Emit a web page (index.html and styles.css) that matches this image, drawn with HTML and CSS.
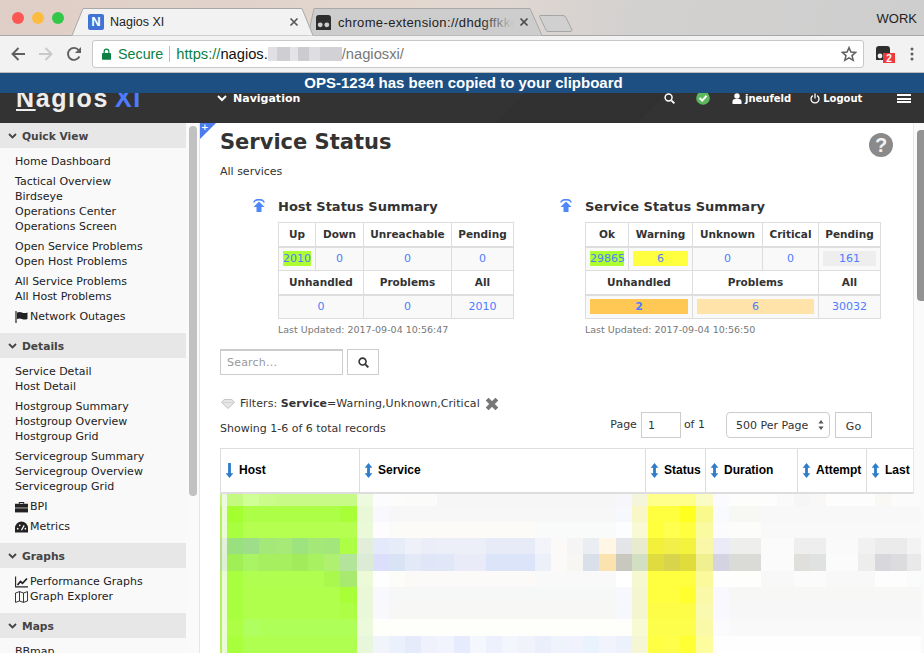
FILE: index.html
```html
<!DOCTYPE html>
<html lang="en">
<head>
    <meta charset="UTF-8">
    <meta name="viewport" content="width=device-width, initial-scale=1.0">
    <title>Service Status</title>
    <link rel="stylesheet" href="styles.css">
</head>
<body>
    <!-- Browser tabs -->
    <div class="tabstrip">
        <div class="lights">
            <span class="light light-red"></span>
            <span class="light light-yellow"></span>
            <span class="light light-green"></span>
        </div>
        <div class="tab tab-active">
            <svg class="tab-shape" viewBox="0 0 241 28" preserveAspectRatio="none"><path d="M0 27.5 L11 .5 H230 L241 27.5" fill="#f2f2f2" stroke="#a8a8a8"/></svg>
            <span class="favicon">N</span>
            <span class="tab-title">Nagios XI</span>
            <svg class="tab-close" viewBox="0 0 10 10"><path d="M1.5 1.5 L8.5 8.5 M8.5 1.5 L1.5 8.5" stroke="#5a5a5a" stroke-width="1.7"/></svg>
        </div>
        <div class="tab tab-other">
            <svg class="tab-shape" viewBox="0 0 234 28" preserveAspectRatio="none"><path d="M0 27.5 L0 27.5 L6 .5 H222 L234 27.5" fill="#cdcdcd" stroke="#a8a8a8"/></svg>
            <svg class="ext-favicon" viewBox="0 0 16 16"><path d="M3 0 H13 Q16 0 16 3 V16 H0 V3 Q0 0 3 0Z" fill="#2e2e2e"/><circle cx="4.5" cy="10.5" r="2.6" fill="#cdcdcd"/><circle cx="11.5" cy="10.5" r="2.6" fill="#cdcdcd"/></svg>
            <span class="tab-title tab-title-fade">chrome-extension://dhdgffkkel</span>
            <svg class="tab-close" viewBox="0 0 10 10"><path d="M1.5 1.5 L8.5 8.5 M8.5 1.5 L1.5 8.5" stroke="#4a4a4a" stroke-width="1.7"/></svg>
        </div>
        <svg class="newtab" viewBox="0 0 34 17"><path d="M1 .5 H24 Q26 .5 27 2.5 L33 15 Q33 16.5 31 16.5 H9 Q7.5 16.5 7 15 L.5 1.5 Q.5 .5 1 .5Z" fill="#d0d0d0" stroke="#a5a5a5"/></svg>
        <span class="profile">WORK</span>
    </div>

    <!-- Browser toolbar -->
    <div class="toolbar">
        <svg class="tool-icon" viewBox="0 0 16 16"><path d="M15 8 H2.5 M8.5 2 L2.5 8 L8.5 14" fill="none" stroke="#5f5f5f" stroke-width="1.9"/></svg>
        <svg class="tool-icon" viewBox="0 0 16 16"><path d="M1 8 H13.5 M7.5 2 L13.5 8 L7.5 14" fill="none" stroke="#c9c9c9" stroke-width="1.9"/></svg>
        <svg class="tool-icon" viewBox="0 0 16 16"><path d="M13.4 10.5 A6 6 0 1 1 12.6 4" fill="none" stroke="#5f5f5f" stroke-width="1.9"/><path d="M15 1 V7 H9Z" fill="#5f5f5f"/></svg>
        <div class="omnibox">
            <svg class="lock" viewBox="0 0 10 13"><path d="M2.4 6 V3.7 A2.6 2.6 0 0 1 7.6 3.7 V6" fill="none" stroke="#0b8043" stroke-width="1.3"/><rect y="5.4" width="10" height="7.6" rx="1" fill="#0b8043"/></svg>
            <span class="secure">Secure</span>
            <span class="omni-sep"></span>
            <span class="url"><span class="url-scheme">https://</span>nagios.<span class="url-blur"></span><span class="url-path">/nagiosxi/</span></span>
            <svg class="star" viewBox="0 0 16 16"><path d="M8 1.6 L9.9 6 L14.7 6.4 L11 9.6 L12.2 14.3 L8 11.8 L3.8 14.3 L5 9.6 L1.3 6.4 L6.1 6Z" fill="none" stroke="#5f5f5f" stroke-width="1.5"/></svg>
        </div>
        <div class="ext-icon">
            <svg viewBox="0 0 14 14"><path d="M3 0 H11 Q14 0 14 3 V14 H0 V3 Q0 0 3 0Z" fill="#2e2e2e"/><circle cx="4" cy="10" r="2.4" fill="#f2f2f2"/></svg>
            <span class="ext-badge">2</span>
        </div>
        <svg class="menu-dots" viewBox="0 0 4 14"><circle cx="2" cy="2" r="1.5" fill="#5f5f5f"/><circle cx="2" cy="7" r="1.5" fill="#5f5f5f"/><circle cx="2" cy="12" r="1.5" fill="#5f5f5f"/></svg>
    </div>

    <div class="notice">OPS-1234 has been copied to your clipboard</div>

    <!-- Nagios top bar -->
    <div class="topnav">
        <div class="topnav-row">
            <span class="logo"><span class="logo-n">N</span>agios<span class="logo-xi">XI</span></span>
            <svg class="nav-chevron" viewBox="0 0 10 7"><path d="M1 1 L5 5 L9 1" fill="none" stroke="#fff" stroke-width="2"/></svg>
            <span class="nav-link nav-main">Navigation</span>
            <svg class="nav-search" viewBox="0 0 12 12"><circle cx="5" cy="5" r="3.8" fill="none" stroke="#fff" stroke-width="1.6"/><path d="M8 8 L11.3 11.3" stroke="#fff" stroke-width="2"/></svg>
            <svg class="nav-ok" viewBox="0 0 14 14"><circle cx="7" cy="7" r="6.8" fill="#5cb85c"/><path d="M3.6 7 L6.2 9.6 L10.6 4.8" fill="none" stroke="#fff" stroke-width="2"/></svg>
            <svg class="nav-user" viewBox="0 0 10 11"><circle cx="5" cy="3" r="2.7" fill="#fff"/><path d="M.5 11 V8.5 Q.5 6 3 6 H7 Q9.5 6 9.5 8.5 V11Z" fill="#fff"/></svg>
            <span class="nav-link">jneufeld</span>
            <svg class="nav-power" viewBox="0 0 10 11"><path d="M2.8 2.6 A4 4 0 1 0 7.2 2.6" fill="none" stroke="#fff" stroke-width="1.3"/><path d="M5 .5 V5.5" stroke="#fff" stroke-width="1.3"/></svg>
            <span class="nav-link">Logout</span>
            <span class="hamburger"></span>
        </div>
    </div>

    <div class="layout">
        <!-- Sidebar -->
        <aside class="sidebar">
            <nav class="side-nav">
                <div class="side-head"><svg viewBox="0 0 9 6"><path d="M1 1 L4.5 4.5 L8 1" fill="none" stroke="#444" stroke-width="1.8"/></svg>Quick View</div>
                <div class="side-body">
                    <ul><li>Home Dashboard</li></ul>
                    <ul><li>Tactical Overview</li><li>Birdseye</li><li>Operations Center</li><li>Operations Screen</li></ul>
                    <ul><li>Open Service Problems</li><li>Open Host Problems</li></ul>
                    <ul><li>All Service Problems</li><li>All Host Problems</li></ul>
                    <ul><li class="with-icon"><svg viewBox="0 0 13 12"><path d="M1 0 V12" stroke="#222" stroke-width="1.2"/><path d="M2 1.5 Q5 .5 7 1.5 T12.5 1.5 V8 Q9 9 7 8 T2 8Z" fill="#222"/></svg>Network Outages</li></ul>
                </div>
                <div class="side-head"><svg viewBox="0 0 9 6"><path d="M1 1 L4.5 4.5 L8 1" fill="none" stroke="#444" stroke-width="1.8"/></svg>Details</div>
                <div class="side-body">
                    <ul><li>Service Detail</li><li>Host Detail</li></ul>
                    <ul><li>Hostgroup Summary</li><li>Hostgroup Overview</li><li>Hostgroup Grid</li></ul>
                    <ul><li>Servicegroup Summary</li><li>Servicegroup Overview</li><li>Servicegroup Grid</li></ul>
                    <ul><li class="with-icon"><svg viewBox="0 0 12 10"><path d="M4 2 V.8 H8 V2" fill="none" stroke="#222" stroke-width="1"/><rect y="2" width="12" height="3.6" fill="#222"/><rect y="6.2" width="12" height="3.8" fill="#222"/></svg>BPI</li></ul>
                    <ul><li class="with-icon"><svg viewBox="0 0 12 10"><path d="M0 10 V6 A6 6 0 0 1 12 6 V10Z" fill="#222"/><path d="M6 8 L8.4 3.5" stroke="#f9f9f9" stroke-width="1.2"/><circle cx="2.5" cy="6.5" r=".8" fill="#f9f9f9"/><circle cx="4.4" cy="3.4" r=".8" fill="#f9f9f9"/><circle cx="9.6" cy="6.5" r=".8" fill="#f9f9f9"/></svg>Metrics</li></ul>
                </div>
                <div class="side-head"><svg viewBox="0 0 9 6"><path d="M1 1 L4.5 4.5 L8 1" fill="none" stroke="#444" stroke-width="1.8"/></svg>Graphs</div>
                <div class="side-body">
                    <ul><li class="with-icon"><svg viewBox="0 0 13 11"><path d="M.6 0 V10.4 H13" fill="none" stroke="#222" stroke-width="1.1"/><path d="M2.5 8.5 L5.5 5 L7.5 6.8 L12 2" fill="none" stroke="#222" stroke-width="1.8"/></svg>Performance Graphs</li>
                    <li class="with-icon"><svg viewBox="0 0 13 12"><path d="M.5 2 L4.5 .6 L8.5 2 L12.5 .6 V10 L8.5 11.4 L4.5 10 L.5 11.4Z M4.5 .6 V10 M8.5 2 V11.4" fill="none" stroke="#222" stroke-width=".9"/></svg>Graph Explorer</li></ul>
                </div>
                <div class="side-head"><svg viewBox="0 0 9 6"><path d="M1 1 L4.5 4.5 L8 1" fill="none" stroke="#444" stroke-width="1.8"/></svg>Maps</div>
                <div class="side-body">
                    <ul><li>BBmap</li></ul>
                </div>
            </nav>
            <div class="side-scroll"><span class="side-thumb"></span></div>
        </aside>

        <!-- Main content -->
        <main class="content">
            <span class="corner-tab"></span>
            <span class="corner-plus">+</span>
            <div class="page-scroll"><span class="page-thumb"></span></div>

            <div class="title-row">
                <h1>Service Status</h1>
                <span class="help-btn">?</span>
            </div>
            <p class="subtitle">All services</p>

            <div class="summaries">
                <section class="summary summary-host">
                    <svg class="pin" viewBox="0 0 12 13"><path d="M1 3.6 A5 3 0 0 1 11 3.6" fill="none" stroke="#4d89f9" stroke-width="1.6"/><path d="M6 2.6 L11.5 8 H8.5 V13 H3.5 V8 H.5Z" fill="#4d89f9"/></svg>
                    <div>
                        <h2>Host Status Summary</h2>
                        <table class="stat-table">
                            <colgroup><col class="c37"><col class="c48"><col class="c88"><col class="c62"></colgroup>
                            <tr class="stat-head"><th>Up</th><th>Down</th><th>Unreachable</th><th>Pending</th></tr>
                            <tr class="stat-vals"><td><a class="fill-ok">2010</a></td><td><a>0</a></td><td><a>0</a></td><td><a>0</a></td></tr>
                            <tr class="stat-head"><th colspan="2">Unhandled</th><th>Problems</th><th>All</th></tr>
                            <tr class="stat-vals"><td colspan="2"><a>0</a></td><td><a>0</a></td><td><a>2010</a></td></tr>
                        </table>
                        <p class="updated">Last Updated: 2017-09-04 10:56:47</p>
                    </div>
                </section>
                <section class="summary">
                    <svg class="pin" viewBox="0 0 12 13"><path d="M1 3.6 A5 3 0 0 1 11 3.6" fill="none" stroke="#4d89f9" stroke-width="1.6"/><path d="M6 2.6 L11.5 8 H8.5 V13 H3.5 V8 H.5Z" fill="#4d89f9"/></svg>
                    <div>
                        <h2>Service Status Summary</h2>
                        <table class="stat-table">
                            <colgroup><col class="c43"><col class="c64"><col class="c70"><col class="c56"><col class="c62"></colgroup>
                            <tr class="stat-head"><th>Ok</th><th>Warning</th><th>Unknown</th><th>Critical</th><th>Pending</th></tr>
                            <tr class="stat-vals"><td><a class="fill-ok">29865</a></td><td><a class="fill-warn">6</a></td><td><a>0</a></td><td><a>0</a></td><td><a class="fill-pending">161</a></td></tr>
                            <tr class="stat-head"><th colspan="2">Unhandled</th><th colspan="2">Problems</th><th>All</th></tr>
                            <tr class="stat-vals"><td colspan="2"><a class="fill-unhandled">2</a></td><td colspan="2"><a class="fill-problems">6</a></td><td><a>30032</a></td></tr>
                        </table>
                        <p class="updated">Last Updated: 2017-09-04 10:56:50</p>
                    </div>
                </section>
            </div>

            <div class="search-row">
                <input class="search-input" type="text" placeholder="Search...">
                <button class="search-btn"><svg viewBox="0 0 12 12"><circle cx="5" cy="5" r="3.8" fill="none" stroke="#333" stroke-width="1.7"/><path d="M8 8 L11.3 11.3" stroke="#333" stroke-width="2.1"/></svg></button>
            </div>

            <div class="records-row">
                <div>
                    <div class="filters">
                        <svg class="gem" viewBox="0 0 14 10"><path d="M3 .5 H11 L13.5 3.5 L7 9.5 L.5 3.5Z" fill="#e6e6e6" stroke="#bbb" stroke-width=".8"/><path d="M.5 3.5 H13.5" stroke="#cfcfcf" stroke-width=".8"/></svg>
                        <span class="filter-text">Filters: <b>Service</b>=Warning,Unknown,Critical</span>
                        <svg class="filter-x" viewBox="0 0 13 13"><path d="M2 2 L11 11 M11 2 L2 11" stroke="#777" stroke-width="3.8"/></svg>
                    </div>
                    <p class="showing">Showing 1-6 of 6 total records</p>
                </div>
                <div class="pager">
                    <span class="pager-label">Page</span>
                    <input class="page-input" type="text" value="1">
                    <span class="pager-label">of 1</span>
                    <div class="per-page">500 Per Page
                        <svg viewBox="0 0 6 10"><path d="M3 0 L5.6 3.6 H.4Z M3 10 L5.6 6.4 H.4Z" fill="#555"/></svg>
                    </div>
                    <button class="go-btn">Go</button>
                </div>
            </div>

            <table class="service-table">
                <colgroup><col class="w-host"><col class="w-service"><col class="w-status"><col class="w-duration"><col class="w-attempt"><col class="w-last"></colgroup>
                <tr>
                    <th><svg class="sort" viewBox="0 0 9 16"><path d="M3 0 H6 V11 H8.6 L4.5 16 L.4 11 H3Z" fill="#2f7cc8"/></svg>Host</th>
                    <th><svg class="sort" viewBox="0 0 9 16"><path d="M4.5 0 L8.6 5 H6 V11 H8.6 L4.5 16 L.4 11 H3 V5 H.4Z" fill="#2f7cc8"/></svg>Service</th>
                    <th><svg class="sort" viewBox="0 0 9 16"><path d="M4.5 0 L8.6 5 H6 V11 H8.6 L4.5 16 L.4 11 H3 V5 H.4Z" fill="#2f7cc8"/></svg>Status</th>
                    <th><svg class="sort" viewBox="0 0 9 16"><path d="M4.5 0 L8.6 5 H6 V11 H8.6 L4.5 16 L.4 11 H3 V5 H.4Z" fill="#2f7cc8"/></svg>Duration</th>
                    <th><svg class="sort" viewBox="0 0 9 16"><path d="M4.5 0 L8.6 5 H6 V11 H8.6 L4.5 16 L.4 11 H3 V5 H.4Z" fill="#2f7cc8"/></svg>Attempt</th>
                    <th><svg class="sort" viewBox="0 0 9 16"><path d="M4.5 0 L8.6 5 H6 V11 H8.6 L4.5 16 L.4 11 H3 V5 H.4Z" fill="#2f7cc8"/></svg>Last</th>
                </tr>
            </table>

            <!-- Pixelated table rows, filled by mosaic.js -->
            <div class="mosaic" id="mosaic"></div>
        </main>
    </div>
    <script src="mosaic.js"></script>
</body>
</html>
```

FILE: styles.css
```css
* {
  box-sizing: border-box;
}

body {
  margin: 0;
  width: 924px;
  height: 653px;
  overflow: hidden;
  background: #fff;
  font-family: "DejaVu Sans", Verdana, sans-serif;
  font-size: 11px;
  color: #333;
}

ul, p, h1, h2 {
  margin: 0;
  padding: 0;
}

svg {
  display: block;
  flex: none;
}

/* browser tabs */
.tabstrip {
  display: flex;
  height: 36px;
  border-bottom: 1px solid #a8a8a8;
  background: linear-gradient(100deg, #dfcec5 0%, #e3d8d1 50%, #d3d1d0 68%, #cecece 100%);
  font-family: "Liberation Sans", Arial, sans-serif;
  font-size: 13px;
  color: #222;
}

.lights {
  display: flex;
  width: 72px;
  padding: 12px 0 0 12px;
  gap: 8px;
}

.light {
  width: 12px;
  height: 12px;
  border-radius: 50%;
}

.light-red { background: #fc5753; }
.light-yellow { background: #fdbc40; }
.light-green { background: #33c748; }

.tab {
  position: relative;
  display: flex;
  align-items: center;
  height: 28px;
  margin-top: 8px;
}

.tab-shape {
  position: absolute;
  top: 0;
  left: 0;
  width: 100%;
  height: 100%;
}

.tab-active {
  width: 241px;
  padding-left: 16px;
  z-index: 1;
}

.tab-other {
  width: 234px;
  margin-left: -5px;
  padding-left: 8px;
}

.favicon {
  position: relative;
  width: 16px;
  height: 16px;
  border-radius: 2px;
  background: #3f74d6;
  color: #fff;
  font-weight: bold;
  font-size: 13px;
  line-height: 16px;
  text-align: center;
}

.ext-favicon {
  position: relative;
  width: 15px;
  height: 15px;
}

.tab-title {
  position: relative;
  margin-left: 6px;
  font-size: 12.5px;
  white-space: nowrap;
  width: 174px;
}

.tab-other .tab-title {
  margin-left: 7px;
  width: 176px;
  font-size: 13px;
  letter-spacing: .35px;
  overflow: hidden;
}

.tab-title-fade::after {
  content: "";
  position: absolute;
  top: 0;
  right: 0;
  bottom: 0;
  width: 34px;
  background: linear-gradient(90deg, rgba(205, 205, 205, 0), #cdcdcd);
}

.tab-close {
  position: relative;
  width: 10px;
  height: 10px;
  margin-left: 5px;
}

.newtab {
  width: 34px;
  height: 17px;
  margin: 15px 0 0 -3px;
}

.profile {
  margin: 11px 0 0 auto;
  padding-right: 7px;
  font-size: 13px;
}

/* browser toolbar */
.toolbar {
  display: flex;
  align-items: center;
  height: 37px;
  padding-bottom: 1px;
  background: #f2f2f2;
  border-bottom: 1px solid #bcbcbc;
  font-family: "Liberation Sans", Arial, sans-serif;
  font-size: 15px;
}

.tool-icon {
  width: 16px;
  height: 16px;
  margin-left: 12px;
}

.tool-icon:first-child {
  margin-left: 10px;
}

.omnibox {
  display: flex;
  align-items: center;
  width: 772px;
  height: 28px;
  margin-left: 10px;
  padding: 0 6px 0 9px;
  background: #fff;
  border: 1px solid #c8c8c8;
  border-radius: 3px;
}

.lock {
  width: 9px;
  height: 12px;
}

.secure {
  margin-left: 7px;
  color: #0b8043;
  font-size: 14.3px;
}

.omni-sep {
  width: 1px;
  height: 16px;
  margin: 0 6px;
  background: #bbb;
}

.url {
  flex: 1;
  display: flex;
  align-items: center;
  font-size: 14.7px;
  color: #111;
}

.url-scheme {
  color: #0b8043;
}

.url-blur {
  width: 74px;
  height: 14px;
  background: linear-gradient(90deg, #e0e0e4 0 12%, #cfcfd3 12% 30%, #e4e4e7 30% 40%, #cbcbd0 40% 55%, #dedee2 55% 70%, #d2d2d6 70% 100%);
}

.url-path {
  color: #777;
}

.star {
  width: 16px;
  height: 16px;
}

.ext-icon {
  position: relative;
  width: 14px;
  height: 18px;
  margin-left: 12px;
}

.ext-icon svg {
  width: 14px;
  height: 14px;
  margin-top: 1px;
}

.ext-badge {
  position: absolute;
  top: 8px;
  left: 7px;
  width: 12px;
  height: 10px;
  background: #ee3a3a;
  color: #fff;
  font-size: 10px;
  font-weight: bold;
  line-height: 11px;
  text-align: center;
}

.menu-dots {
  width: 4px;
  height: 14px;
  margin-left: 20px;
}

/* copied message */
.notice {
  height: 20px;
  padding-left: 3px;
  background: #1d4f82;
  color: #fff;
  font-family: "Liberation Sans", Arial, sans-serif;
  font-size: 15px;
  font-weight: bold;
  line-height: 20px;
  text-align: center;
}

/* nagios top bar */
.topnav {
  height: 30px;
  overflow: hidden;
  background:
    linear-gradient(135deg, rgba(0, 0, 0, 0) 55%, rgba(0, 0, 0, .05) 55% 70%, rgba(0, 0, 0, 0) 70%),
    #333;
  color: #fff;
}

.topnav-row {
  display: flex;
  align-items: center;
  height: 10px;
}

.logo {
  width: 201px;
  margin-left: 16px;
  font-family: "Liberation Sans", Arial, sans-serif;
  font-size: 25px;
  font-weight: bold;
  letter-spacing: 1.6px;
  white-space: nowrap;
  color: #eee;
}

.logo-n {
  text-decoration: underline;
}

.logo-xi {
  margin-left: 6px;
  color: #4d7cff;
}

.nav-link {
  font-weight: bold;
  font-size: 10px;
}

.nav-chevron {
  width: 10px;
  height: 7px;
}

.nav-main {
  width: 431px;
  margin-left: 6px;
  font-size: 11px;
}

.nav-search {
  width: 11px;
  height: 11px;
}

.nav-ok {
  width: 14px;
  height: 14px;
  margin-left: 21px;
}

.nav-user {
  width: 10px;
  height: 11px;
  margin: 0 3px 0 22px;
}

.nav-power {
  width: 10px;
  height: 11px;
  margin: 0 3px 0 19px;
}

.hamburger {
  width: 14px;
  height: 9px;
  margin-left: 35px;
  border-top: 2px solid #fff;
  border-bottom: 2px solid #fff;
  background: linear-gradient(#fff, #fff) center / 100% 2px no-repeat;
  margin-top: 1px;
}

/* page layout */
.layout {
  display: flex;
  height: 530px;
  overflow: hidden;
}

.sidebar {
  display: flex;
  flex: none;
  width: 200px;
}

.side-nav {
  width: 186px;
  background: #f9f9f9;
}

.side-head {
  display: flex;
  align-items: center;
  gap: 5px;
  height: 25px;
  padding: 1px 0 0 8px;
  background: #e7e7e7;
  color: #444;
  font-size: 10.7px;
  font-weight: bold;
}

.side-head svg {
  width: 9px;
  height: 6px;
}

.side-body {
  display: flex;
  flex-direction: column;
  gap: 5px;
  padding: 6px 0 9px 15px;
  color: #222;
}

.side-body ul {
  list-style: none;
}

.side-body li {
  height: 15px;
  line-height: 15px;
  white-space: nowrap;
}

.with-icon {
  display: flex;
  align-items: center;
}

.with-icon svg {
  width: 13px;
  height: 12px;
  margin-right: 2px;
}

.side-scroll {
  width: 14px;
  padding: 3px 0 0 3px;
  background: #fafafa;
  border-right: 1px solid #e6e6e6;
}

.side-thumb {
  display: block;
  width: 8px;
  height: 370px;
  border-radius: 4px;
  background: #c1c1c1;
}

.content {
  position: relative;
  flex: 1;
  padding-left: 20px;
  overflow: hidden;
}

.corner-tab {
  position: absolute;
  top: 0;
  left: 0;
  width: 16px;
  height: 16px;
  background: #4d7cf0;
  clip-path: polygon(0 0, 100% 0, 0 100%);
}

.corner-plus {
  position: absolute;
  top: -2px;
  left: 1px;
  color: #fff;
  font-size: 9px;
  font-weight: bold;
  line-height: 12px;
}

.page-scroll {
  position: absolute;
  top: 0;
  bottom: 0;
  left: 713px;
  width: 11px;
  background: #fafafa;
  border-left: 1px solid #e8e8e8;
}

.page-thumb {
  display: block;
  width: 8px;
  height: 171px;
  margin: 7px 0 0 3px;
  border-radius: 4px 0 0 4px;
  background: #939393;
}

.title-row {
  display: flex;
  align-items: flex-start;
  justify-content: space-between;
  width: 673px;
  padding-top: 4px;
}

h1 {
  font-size: 21px;
  line-height: 30px;
  font-weight: bold;
  color: #333;
}

.help-btn {
  width: 24px;
  height: 24px;
  margin-top: 6px;
  border-radius: 50%;
  background: #8a8a8a;
  color: #f2f2f2;
  font-family: "Liberation Sans", Arial, sans-serif;
  font-size: 20px;
  font-weight: bold;
  line-height: 24px;
  text-align: center;
}

.subtitle {
  margin-top: 7px;
  line-height: 15px;
}

/* status summaries */
.summaries {
  display: flex;
  margin: 20px 0 0 33px;
}

.summary {
  display: flex;
}

.summary-host {
  width: 307px;
}

.pin {
  width: 12px;
  height: 13px;
  margin-right: 13px;
}

h2 {
  height: 16px;
  margin-bottom: 7px;
  font-size: 13px;
  line-height: 16px;
  white-space: nowrap;
}

.stat-table {
  table-layout: fixed;
  border-collapse: collapse;
  width: 1px;
  color: #333;
}

.c37 { width: 37px; }
.c43 { width: 43px; }
.c48 { width: 48px; }
.c56 { width: 56px; }
.c62 { width: 62px; }
.c64 { width: 64px; }
.c70 { width: 70px; }
.c88 { width: 88px; }

.stat-table th,
.stat-table td {
  padding: 4px 4px 3px;
  border: 1px solid #ddd;
  text-align: center;
  line-height: 15px;
  height: 24px;
  white-space: nowrap;
}

.stat-table td {
  padding: 3px 4px 4px;
}

.stat-table th {
  font-size: 10.5px;
  font-weight: bold;
}

.stat-head th {
  border-bottom: 2px solid #ddd;
}

.stat-vals td {
  background: #f9f9f9;
}

.stat-table a {
  display: block;
  color: #4d7cff;
}

.fill-ok { background: #adff2f; }
.fill-warn { background: #ffff40; }
.fill-pending { background: #eee; }
.fill-unhandled { background: #ffc855; font-weight: bold; }
.fill-problems { background: #ffe3a8; }

.updated {
  margin-top: 3px;
  font-size: 9.5px;
  line-height: 15px;
  color: #777;
  white-space: nowrap;
}

/* search and filters */
.search-row {
  display: flex;
  gap: 4px;
  margin-top: 12px;
}

.search-input {
  width: 123px;
  height: 26px;
  padding: 0 6px;
  border: 1px solid #ccc;
  border-width: 2px 1px 1px 1px;
  font: 11px "DejaVu Sans", Verdana, sans-serif;
  letter-spacing: .2px;
}

.search-input::placeholder {
  color: #999;
}

.search-btn {
  display: flex;
  align-items: center;
  justify-content: center;
  width: 32px;
  height: 26px;
  padding: 0;
  background: #fff;
  border: 1px solid #ccc;
}

.search-btn svg {
  width: 11px;
  height: 11px;
}

.records-row {
  display: flex;
  width: 652px;
  margin-top: 21px;
  justify-content: space-between;
}

.filters {
  display: flex;
  align-items: center;
  height: 15px;
  padding-left: 1px;
}

.gem {
  width: 14px;
  height: 10px;
  margin-right: 5px;
}

.filter-text {
  letter-spacing: .07px;
}

.filter-x {
  width: 14px;
  height: 14px;
  margin-left: 5px;
}

.showing {
  margin-top: 10px;
  line-height: 15px;
  color: #333;
}

.pager {
  display: flex;
  align-items: flex-start;
  margin-top: 16px;
}

.pager-label {
  line-height: 25px;
}

.page-input {
  width: 40px;
  height: 26px;
  margin: 0 3px 0 4px;
  padding: 0 6px;
  border: 1px solid #ccc;
  font: 11px "DejaVu Sans", Verdana, sans-serif;
  color: #333;
}

.per-page {
  display: flex;
  align-items: center;
  justify-content: space-between;
  width: 104px;
  height: 26px;
  margin: 0 5px 0 21px;
  padding: 0 5px 0 9px;
  border: 1px solid #ccc;
  border-radius: 4px;
  background: #fff;
}

.per-page svg {
  width: 6px;
  height: 10px;
}

.go-btn {
  width: 37px;
  height: 26px;
  padding: 2px 0 0;
  background: #fff;
  border: 1px solid #ccc;
  font: 11px "DejaVu Sans", Verdana, sans-serif;
  color: #333;
}

/* service table */
.service-table {
  table-layout: fixed;
  border-collapse: collapse;
  width: 694px;
  margin-top: 10px;
}

.w-host { width: 139px; }
.w-service { width: 286px; }
.w-status { width: 60px; }
.w-duration { width: 92px; }
.w-attempt { width: 69px; }
.w-last { width: 48px; }

.service-table th {
  height: 44px;
  padding: 0 0 0 4px;
  border: 1px solid #ddd;
  border-bottom-width: 2px;
  background: #fff;
  color: #000;
  font-family: "Liberation Sans", Arial, sans-serif;
  font-size: 12px;
  font-weight: bold;
  text-align: left;
  white-space: nowrap;
}

.sort {
  display: inline-block;
  width: 9px;
  height: 15px;
  margin-right: 5px;
  vertical-align: -4px;
}

.mosaic {
  position: relative;
  z-index: 1;
  display: grid;
  grid-template-columns: 2px 5px repeat(42, 16.2px) 13.8px;
  grid-template-rows: 12px repeat(8, 16.25px) 1fr;
  width: 701px;
  height: 159px;
}
```

FILE: mosaic.js
```js
// colours of the pixelated rows, "hex*n" repeats a cell n times
const rows = [
  "c4f47c eefae0 c4fa80 d0ff98 cbfc8b c8fa88*5 eefae0 fcfbfe fcfcfb fbfbfa*2 f6f6f6*11 f7f7fb f5f5dc ffff8c*3 fbfbc4 fbfbff fdfdfb*2 fdfdfd fafafa f6f6f6 f9f8f6 fdfdfd*3 f9f8f5 fbfbfb*2",
  "b4f060 ecfad8 a4ff30 acff46*6 a8ff38 e8f8d8 f9f8fe f6f7f6*14 f6f8fe f9f6c8 ffff40*2 ffff20 fafa8c f8fafd f7f8f3*2 f8f8f8*10",
  "b4f060 ecfad8 a8ff40 b4ff50*7 eafad8 fefcff fbfcf8 fcfbf8*8 f9fafa*5 fbfdff f9fad4 ffff3c ffff50 ffff40 fafaa0 fbfbfe fcfcfa*2 f9f9f9*10",
  "b4dc90 e4f0d8 99e07f 9ede8a a5e87a a8ea78 9de480 a5e87a a3e67c adff45 e2eeda e4eafc e6ecf8 eef1f8 ebeef8 eceff8*3 e6ebf7*3 f2f4fa fbfaf8 f5f5f5 eaedf2 fff6e6 e3e5e9 e8ebcd f3f03c f2ef48 f3f23c f8f8a8 ebebf8 eeefec*2 fbfbfb*2 eeeeee*2 fafafa*2 f1f1f1 ebebeb*2 f3f3f3",
  "b4dc90 e0f0d4 a0f055 a8f464 a6f060*2 a2ec5c a6f260 aff070 b4e49c dbebd6 dcdffc d8e4f6 e4e9f8 e0e6f8 e0e7f6 e9ecf8*2 dbe4f8*3 ecf0f9 fbfaf8 f8f6f3 d9e0ea fae3ae c8c8be d3dfc3 e0dc40 d8d44c e0dc3c f0f090 d3d3e2 dadad6*2 fbfbfb*2 e0dfdc e0e2e1 fbfbfb*2 ededeb d8d8dc dcdcde e9e9e9",
  "b4f060 ecfad8 a8ff40 b0ff50*5 aaf84e a8ea70 ecfad8 fffeff fcfdf8 fbfaf8*8 f9f9f9*5 ffffff f6f8d0 ffff40*3 fafa9c fefefc*3 f8f8f8*2 fbfbfb*2 f8f8f8*3 fdfdfd*2 fafbfb",
  "b4f060 ecfad8 a8ff40 b0ff4c*6 a8ff38 e8f8d8 f9f8fe f6f7f7*14 f7f8fe f4f6d0 ffff40*2 ffff30 f9f9a8 f8f8fe f7f7f6*12",
  "b4f060 ecfad8 a8ff40 b0ff4c*6 acff44 e8f8d8 f9f9fd f7f7f6*14 f7f8fe f4f6d0 fdfd48*3 f9f9b0 f8f8fe f7f7f7*12",
  "b4f060 ecfad8 acff44 b0ff60 aeff58*6 ecfadc fefefa*16 f8fad4 fdfd4c*3 f9f9a8 fbfbfe f9f9f9*12",
  "b4f060 ecfad8 a8ff3c aeff50*7 e8f6dc f2f4fc eaf0fc e6ebfc eff2fc f1f4fd e6ecfd f5f7fe edf1fd f4f6fe f1f3fc ebeffc eff3fc f0f3fd eaf2fd f1f4fd ecf1fc f4f6d4 ffff44 ffff4a ffff34 fdfda0 fefefe*13"
];

const mosaic = document.getElementById("mosaic");

rows.forEach((row) => {
  row.split(" ").forEach((run) => {
    const [hex, count] = run.split("*");
    for (let i = 0; i < (count || 1); i++) {
      const cell = document.createElement("div");
      cell.style.background = "#" + hex;
      mosaic.appendChild(cell);
    }
  });
});
```
